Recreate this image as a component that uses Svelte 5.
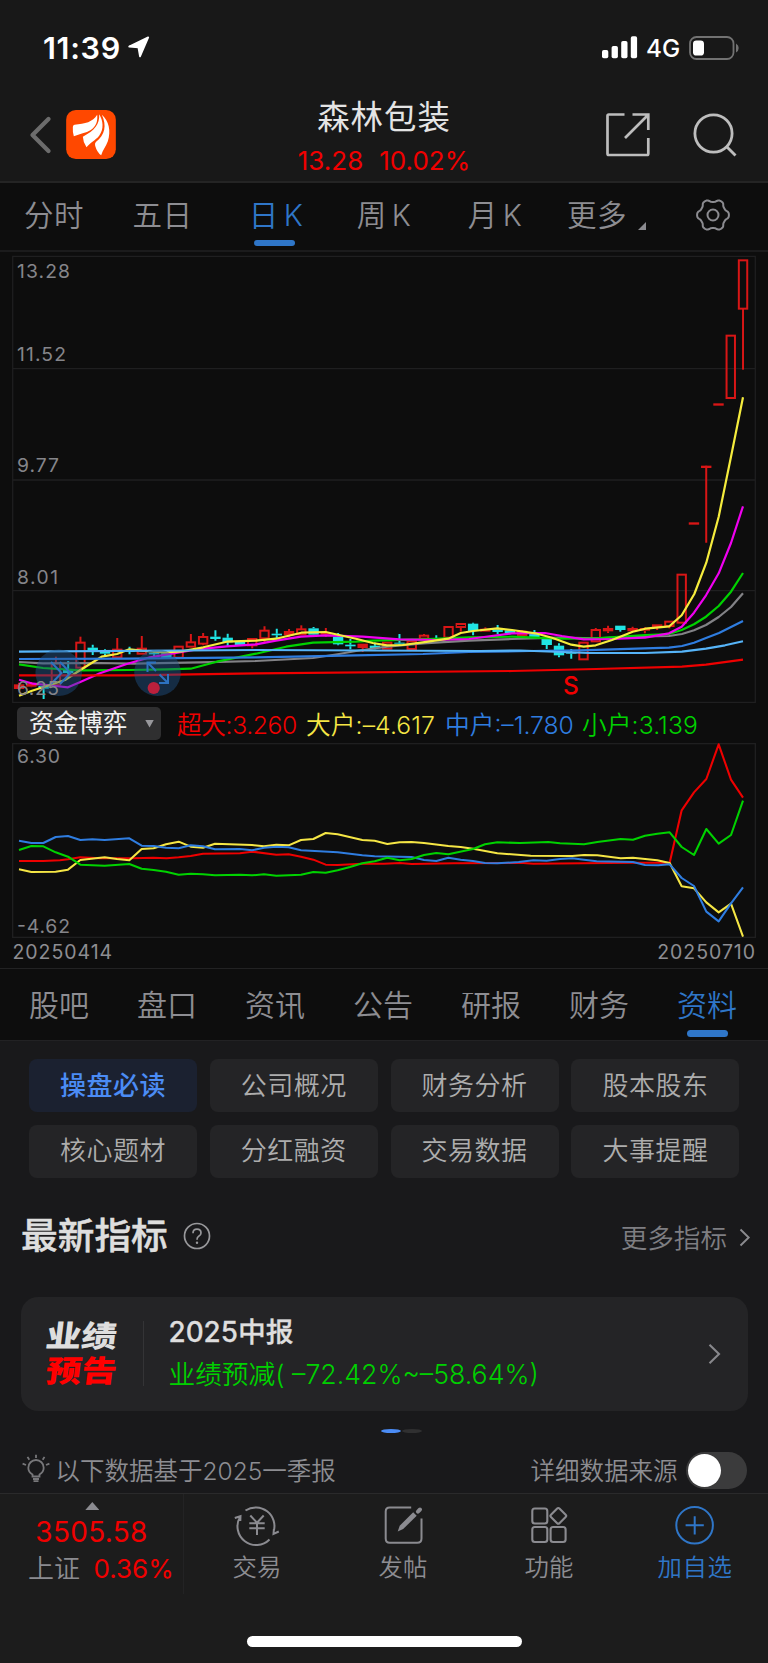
<script>
  const periods = ['分时', '五日', '日 K', '周 K', '月 K', '更多'];
  const sections = ['股吧', '盘口', '资讯', '公告', '研报', '财务', '资料'];
  const topics = ['操盘必读', '公司概况', '财务分析', '股本股东', '核心题材', '分红融资', '交易数据', '大事提醒'];
  const flows = [
    { name: '超大', value: '3.260', color: '#f00000', width: 129, spacing: -0.4 },
    { name: '大户', value: '–4.617', color: '#f5e645', width: 139, spacing: 0.1 },
    { name: '中户', value: '–1.780', color: '#2f7de0', width: 137, spacing: 0 },
    { name: '小户', value: '3.139', color: '#00d200', width: 120, spacing: 0.1 }
  ];

  // kind: u = up (hollow), f = up (filled), d = down; then open/close and high/low
  const candles = [
    ['f', 283, 297, 278, 299], ['f', 280, 290, 276, 292], ['d', 288, 296, 280, 327], ['u', 220, 284, 200, 284],
    ['d', 237, 249, 213, 260], ['u', 158, 233, 140, 233], ['d', 173, 182, 164, 195], ['d', 186, 191, 178, 200],
    ['u', 179, 202, 144, 202], ['d', 180, 186, 170, 193], ['u', 176, 191, 138, 191], ['d', 188, 193, 183, 200],
    ['d', 190, 204, 190, 204], ['u', 170, 203, 170, 203], ['u', 157, 170, 132, 170], ['u', 141, 161, 129, 166],
    ['d', 140, 147, 121, 152], ['d', 143, 157, 131, 168], ['d', 156, 165, 156, 165], ['u', 147, 166, 147, 175],
    ['u', 122, 145, 109, 158], ['d', 131, 136, 116, 145], ['f', 123, 136, 117, 142], ['u', 118, 133, 106, 133],
    ['d', 115, 134, 111, 138], ['f', 127, 134, 114, 140], ['d', 140, 163, 129, 166], ['d', 164, 169, 147, 178],
    ['f', 161, 174, 161, 186], ['d', 167, 174, 158, 178], ['u', 158, 176, 158, 176], ['d', 158, 161, 132, 165],
    ['u', 154, 177, 154, 177], ['u', 137, 146, 132, 146], ['d', 144, 148, 136, 152], ['u', 111, 143, 111, 143],
    ['u', 102, 111, 102, 125], ['d', 101, 123, 98, 136], ['f', 116, 125, 112, 125], ['d', 118, 126, 105, 132],
    ['d', 121, 130, 119, 133], ['f', 122, 138, 120, 138], ['d', 130, 142, 120, 144], ['d', 144, 165, 144, 177],
    ['d', 167, 196, 160, 202], ['d', 186, 191, 177, 206], ['u', 158, 208, 158, 208], ['u', 120, 154, 114, 154],
    ['f', 114, 124, 107, 129], ['d', 107, 120, 107, 125], ['f', 114, 124, 110, 126], ['f', 114, 122, 112, 130],
    ['f', 103, 112, 103, 120], ['u', 95, 108, 95, 115], ['u', -46, 98, -46, 98], ['f', -203, -196, -203, -196],
    ['f', -373, -366, -370, -142], ['f', -560, -553, -560, -553], ['u', -763, -576, -763, -576], ['u', -989, -844, -989, -661]
  ].map(([kind, top, bottom, high, low], i) => ({
    kind,
    x: 19.1 + i * 12.27,
    top: 590 + top / 3,
    bottom: 590 + bottom / 3,
    high: 590 + high / 3,
    low: 590 + low / 3
  }));

  const averages = [
    ['#828286', '19,662 43,663.3 100,663 133,663.7 200,662.3 256,661 313,658 339,654 356,651 387,646.7 423,643.3 469,640.7 512,639 559,637.7 596,638.3 645,636.3 669,636 682,634 694,630.3 706,625 718.7,617 731,607 743,593.3'],
    ['#00d200', '19,664.3 43,668 80,670.3 129,670 167,669.3 190.7,668.7 216.7,661.7 256,653.7 286,646.7 313,642.7 356,641.7 373,640.7 422.7,639.3 469,637.3 512,636.7 558.7,638.7 595.7,638.3 645,635 669,634 681.7,630 694,624.3 706,616.7 718.7,606 731,591.7 743,573'],
    ['#f000f0', '19,679.7 33,683.7 43,684.7 55.7,686 68,687.3 80.3,682 100,673.3 126.7,664 150,657.3 173.3,653.3 196.7,649.3 226.7,646.3 256,644.3 276,640.7 301,636.7 325.7,635.3 362.7,636.7 399.3,639.3 436,640 469,639 512,633.3 545,633 562,636 583.7,639.3 612,639 645,637.7 669,633.3 681.7,626.7 694,612.7 706,595.3 718.7,573.3 731,543 743,506.3'],
    ['#f5ec3d', '19,695.7 31.3,691 46.7,686 65,680 80.3,670 101.7,656.7 117,654 129.3,649.3 141.7,650.7 163.3,652.3 181.7,651.3 203.3,647.3 226.7,641.7 256,640.7 276,638.7 301.3,632.7 325.7,632 338,634.7 356,638.7 372.7,643 387,645.3 402.7,645 422.7,642.3 448.3,638.7 460.7,633 473,631 497.3,628.3 512,630 535.3,633.3 552,637.7 571.3,644.7 583.7,646.7 595.7,645.3 612,640 632.7,631.7 645.3,628.7 669.3,626.3 681.7,615.3 694.3,594 706.3,562.7 718.7,516.7 731,456.7 743,397.3'],
    ['#2f7de0', '19,659 128,658.7 256,657.3 356,655.3 423,654 469,652 530,651 580,650.3 669,647.7 682,646 694,642.7 706,638 719,633 743,621'],
    ['#56b4f8', '19,651.7 256,650 480,651 520,650.5 589,653 645,653 682,651.7 706,648.7 725,645.3 743,641.3'],
    ['#ee0000', '19,675.3 128,675.3 256,673.3 512,671 596,669 682,666.7 706,664.7 743,659.7']
  ];

  const flowLines = [
    ['#ee0000', '57,363 130,363 180,361 204,358 241,352 300,355 400,355 460,353 500,355 536,352 572,348 609,341 720,340 756,335 829,344 866,343 903,350 940,359 977,374 1013,375 1087,371 1152,371 1200,369 1235,372 1360,370 1570,369 1600,371 1900,368 2009,368 2045,211 2082,157 2119,117 2156,13 2193,119 2229,173'],
    ['#f5e645', '57,388 94,396 167,395 204,389 241,360 314,352 351,357 388,361 425,327 461,325 498,313 536,305 572,320 609,323 645,311 756,315 792,319 829,314 866,316 903,300 940,297 977,279 1013,283 1087,300 1124,302 1162,312 1199,307 1235,306 1272,309 1345,318 1382,321 1419,326 1492,340 1592,347 1717,348 1752,345 1792,346 1862,355 1899,353 1972,361 2009,369 2045,439 2082,445 2119,487 2156,517 2193,491 2229,590'],
    ['#2f7de0', '57,302 94,309 130,309 167,291 204,288 241,300 277,298 314,300 388,295 425,317 461,318 498,323 536,325 572,316 609,319 645,328 720,327 756,331 792,323 829,320 866,322 903,331 1013,337 1087,346 1124,349 1235,351 1272,360 1309,363 1345,353 1382,359 1419,363 1455,369 1492,370 1556,366 1600,361 1640,362 1680,357 1717,355 1752,359 1790,364 1899,366 1935,375 1975,376 2009,373 2045,414 2082,438 2119,515 2156,544 2193,490 2229,442'],
    ['#00d200', '57,330 94,318 130,319 167,337 204,350 241,374 314,377 388,372 425,386 461,390 498,395 536,404 572,401 609,403 645,406 720,404 756,406 792,403 829,407 903,404 940,396 977,398 1013,391 1050,381 1087,370 1124,364 1162,353 1199,361 1235,357 1272,345 1309,339 1345,343 1419,327 1455,313 1492,307 1560,309 1645,306 1680,310 1752,313 1792,306 1862,297 1899,299 1935,287 1972,281 2009,277 2045,321 2082,345 2119,267 2156,311 2193,285 2229,182']
  ];

  const priceLabels = [['13.28', 278, 53], ['11.52', 360.5, 49], ['9.77', 472, 42], ['8.01', 583.5, 41], ['6.25', 695.3, 42]];

  const gear = Array.from({ length: 120 }, (_, i) => {
    const a = (i * Math.PI) / 60;
    const r = 14.5 + (1.4 * Math.tanh(1.6 * Math.cos(6 * a))) / Math.tanh(1.6);
    return `${(18 + r * Math.cos(a)).toFixed(2)},${(18 + r * Math.sin(a)).toFixed(2)}`;
  }).join(' ');
</script>

<div class="phone">
  <div class="status">
    <span class="time">11:39</span>
    <svg class="locate" width="22" height="22" viewBox="0 0 22 22"><path d="M1.2 10.5 L20.2 1.4 L12 20.4 L10.4 11.4 Z" fill="#fff" stroke="#fff" stroke-width="1.8" stroke-linejoin="round" /></svg>
    <svg class="signal" width="36" height="23" viewBox="0 0 36 23" fill="#fff">
      <rect x="0" y="14" width="6.3" height="8.3" rx="1.8" /><rect x="9.6" y="10" width="6.3" height="12.3" rx="1.8" />
      <rect x="19.2" y="5" width="6.3" height="17.3" rx="1.8" /><rect x="28.8" y="0.3" width="6.3" height="22" rx="1.8" />
    </svg>
    <span class="net">4G</span>
    <svg class="battery" width="51" height="24" viewBox="0 0 51 24">
      <rect x="1" y="1" width="43.5" height="22" rx="6.5" fill="none" stroke="#727272" stroke-width="1.8" />
      <path d="M47 7.5 Q49.7 9 49.7 12 T47 16.5Z" fill="#727272" />
      <rect x="4" y="4.4" width="11" height="15.2" rx="3.4" fill="#fff" />
    </svg>
  </div>

  <header>
    <svg class="back" width="24" height="40" viewBox="0 0 24 40"><path d="M20.5 4 L4.5 20 L20.5 36" fill="none" stroke="#6c6c6c" stroke-width="4.3" stroke-linecap="round" stroke-linejoin="round" /></svg>
    <svg class="logo" width="50" height="49" viewBox="198 330 149 147">
      <rect x="198" y="330" width="149" height="147" rx="29" fill="#ff4800" />
      <g fill="#fff">
        <path d="M291 344 C278 366 255 371 223 374 Q218 375 218 381 Q217 396 221 409 C238 401 258 399 272 390 C289 378 293 362 291 344Z" />
        <path d="M297 343 C299 372 284 392 248 410 Q249 428 259 442 C270 427 286 421 297 407 C312 388 309 361 297 343Z" />
        <path d="M305 344 C320 376 315 404 287 426 Q283 431 285 437 Q290 456 303 466 C308 450 317 440 323 424 C333 392 326 362 305 344Z" />
      </g>
    </svg>
    <div class="title">
      <h1>森林包装</h1>
      <p><span>13.28</span><span>10.02%</span></p>
    </div>
    <svg class="share" width="46" height="46" viewBox="0 0 46 46" fill="none" stroke="#bdbdbd" stroke-width="2.7">
      <path d="M19.5 2.5 H3.8 Q2.5 2.5 2.5 3.8 V41.5 Q2.5 43 3.8 43 H42 Q43.3 43 43.3 41.5 V26 M27.5 2.5 H43.3 V18 M43 3 L20 26" />
    </svg>
    <svg class="search" width="46" height="46" viewBox="0 0 46 46" fill="none" stroke="#bdbdbd" stroke-width="2.8"><circle cx="21.5" cy="21.5" r="18.6" /><path d="M34 34 L43.5 43.5" /></svg>
  </header>

  <nav class="periods">
    {#each periods as p, i}
      <span class:on={i === 2}>{p}</span>
    {/each}
    <i class="corner"></i>
    <svg class="gear" width="36" height="36" viewBox="0 0 36 36" fill="none" stroke="#8b8b90" stroke-width="2"><polygon points={gear} stroke-linejoin="round" /><circle cx="18" cy="18" r="5.5" /></svg>
  </nav>

  <svg class="kline" width="768" height="451" viewBox="0 252 768 451">
    <g fill="none" stroke="#1f1f20" stroke-width="1.3">
      <rect x="12.7" y="256.4" width="742.6" height="446" />
      <path d="M13 368.7H755M13 480H755M13 590.6H755" />
    </g>
    {#each candles as c}
      {@const color = c.kind === 'd' ? '#20e4e4' : '#d81616'}
      <g stroke={color} stroke-width="2">
        <path d="M{c.x} {c.high}V{c.top}M{c.x} {c.bottom}V{c.low}" />
        {#if c.kind === 'u'}
          <rect x={c.x - 4.2} y={c.top} width="8.4" height={c.bottom - c.top} fill="none" />
        {:else}
          <rect x={c.x - 5.2} y={c.top} width="10.4" height={c.bottom - c.top} fill={color} stroke="none" />
        {/if}
      </g>
    {/each}
    {#each averages as [color, points]}
      <polyline {points} fill="none" stroke={color} stroke-width="2.2" stroke-linejoin="round" />
    {/each}
    <g fill="#1f5288" fill-opacity="0.45"><circle cx="58.7" cy="672.7" r="23.3" /><circle cx="157.5" cy="672.7" r="23.3" /></g>
    <g fill="none" stroke="#2d72c0" stroke-width="2">
      <path d="M51 662 L61.5 673 L51 684 M60 662 L70.5 673 L60 684" />
      <path d="M156 671 L147.5 662.5 M147.5 672 V662.5 H156 M159.5 674.5 L168 683 M168 674 V683 H159" />
    </g>
    <circle cx="153.7" cy="688" r="6.1" fill="#bb203c" />
    <g class="axis">
      {#each priceLabels as [label, y, w]}
        <text x="17" {y} textLength={w}>{label}</text>
      {/each}
    </g>
    <text class="sell" x="563" y="693.5">S</text>
  </svg>

  <div class="legend">
    <div class="select">资金博弈<i></i></div>
    {#each flows as f}
      <span style="color:{f.color};width:{f.width}px;letter-spacing:{f.spacing}px">{f.name}:{f.value}</span>
    {/each}
  </div>

  <svg class="flow" width="768" height="196" viewBox="0 9 2304 588">
    <rect x="38" y="11" width="2228" height="581" fill="none" stroke="#1f1f20" stroke-width="4" />
    {#each flowLines as [color, points]}
      <polyline {points} fill="none" stroke={color} stroke-width="6.2" stroke-linejoin="round" />
    {/each}
    <g class="axis big"><text x="51" y="70" textLength="129">6.30</text><text x="51" y="579" textLength="159">-4.62</text></g>
  </svg>
  <div class="dates"><span>20250414</span><span>20250710</span></div>

  <nav class="sections">
    {#each sections as s, i}
      <span class:on={i === 6}>{s}</span>
    {/each}
  </nav>

  <main>
    <div class="topics">
      {#each topics as t, i}
        <button class:active={i === 0}>{t}</button>
      {/each}
    </div>
    <div class="heading">
      <h2>最新指标</h2>
      <svg width="28" height="28" viewBox="0 0 28 28" fill="none" stroke="#98989b" stroke-width="1.7"><circle cx="14" cy="14" r="12.5" /><path d="M10 11.2 Q10 7.2 14 7.2 T18 11 Q18 13 15.7 14.3 Q14 15.3 14 17.8" /><circle cx="14" cy="20.7" r="1.2" fill="#98989b" stroke="none" /></svg>
      <span class="more">更多指标</span>
      <svg class="chevron" width="12" height="19" viewBox="0 0 12 19" fill="none" stroke="#8b8b8f" stroke-width="1.9"><path d="M1.5 1.5 L9.7 9.5 L1.5 17.5" /></svg>
    </div>
    <section class="card">
      <div class="stamp"><b>业绩</b><b class="red">预告</b></div>
      <div class="report"><strong>2025中报</strong><p>业绩预减( –72.42%~–58.64%)</p></div>
      <svg width="14" height="22" viewBox="0 0 14 22" fill="none" stroke="#88888c" stroke-width="2.1"><path d="M1.5 1.8 L11 11 L1.5 20.2" /></svg>
    </section>
    <div class="pager"><i></i><i></i></div>
    <div class="source">
      <svg width="28" height="30" viewBox="0 0 28 30" fill="none" stroke="#77777a" stroke-width="1.8">
        <path d="M10.5 22.5 V20.5 Q6.3 18 6.3 13.7 A7.7 7.7 0 0 1 21.7 13.7 Q21.7 18 17.5 20.5 V22.5 Z M11 25 H17 M11.5 27.2 H16.5" />
        <path d="M14 0.8 V4 M5.5 2.9 L7.3 5.8 M22.5 2.9 L20.7 5.8 M0.6 9.6 L4 11 M27.4 9.6 L24 11" />
      </svg>
      <span class="note">以下数据基于2025一季报</span>
      <span class="detail">详细数据来源</span>
      <i class="toggle"></i>
    </div>
  </main>

  <footer>
    <div class="index">
      <i></i>
      <b>3505.58</b>
      <p><span>上证</span><em>0.36%</em></p>
    </div>
    <div class="action">
      <svg width="46" height="42" viewBox="0 1 46 42" fill="none" stroke="#8b8b90" stroke-width="2">
        <path d="M11.5 6.5 A18.7 18.7 0 0 1 39.5 28 M35.5 35.5 A18.7 18.7 0 0 1 6 13 M0.8 14 L6.5 12.2 L6.3 17 M44.8 27.5 L39.5 29.8 L39.9 25" />
        <path d="M16.3 11.5 L23 18.7 L29.7 11.5 M15.3 19.3 H30.7 M15.3 24.3 H30.7 M23 18.7 V31" />
      </svg>
      <span>交易</span>
    </div>
    <div class="action">
      <svg width="46" height="42" viewBox="-0.7 0 46 42" fill="none" stroke="#8b8b90" stroke-width="2">
        <path d="M30.5 2.5 H9 Q5 2.5 5 6.5 V33.5 Q5 37.8 9 37.8 H36.5 Q40.8 37.8 40.8 33.5 V13.5" />
        <path d="M17 26.5 L19 20.8 L32.5 7.2 L36 10.8 L22.5 24 Z" fill="#8b8b90" stroke="none" /><path d="M37.2 6.6 L39.3 4.5" stroke-width="4" stroke-linecap="round" />
      </svg>
      <span>发帖</span>
    </div>
    <div class="action">
      <svg width="46" height="42" viewBox="-0.3 0 46 42" fill="none" stroke="#8b8b90" stroke-width="2.1">
        <rect x="6" y="3.5" width="15" height="15" rx="2.5" /><rect x="6" y="22" width="15" height="15" rx="2.5" /><rect x="24.3" y="22" width="15" height="15" rx="2.5" />
        <rect x="26" y="4.8" width="12" height="12" rx="1.6" transform="rotate(45 32 10.8)" />
      </svg>
      <span>功能</span>
    </div>
    <div class="action add">
      <svg width="46" height="42" viewBox="0 0 46 42" fill="none" stroke="#2f76c8" stroke-width="2"><circle cx="22.6" cy="20.3" r="18.3" /><path d="M13.6 20.3 H31.8 M22.7 11.2 V29.4" /></svg>
      <span>加自选</span>
    </div>
    <div class="home"></div>
  </footer>
</div>

<style>
  :global(body) { margin: 0; background: #181818; }
  .phone { width: 768px; height: 1663px; overflow: hidden; display: flex; flex-direction: column; background: #0d0d0d; color: #8d8d92; font-family: Inter, "Noto Sans CJK SC", sans-serif; font-weight: 350; white-space: nowrap; }
  .phone > * { flex: none; }
  svg { display: block; flex: none; }
  h1, h2, p { margin: 0; }
  i, em { font-style: normal; }

  .status { height: 95px; box-sizing: border-box; display: flex; align-items: center; padding-left: 43px; background: #181818; color: #fff; }
  .time { width: 85px; font-size: 30.5px; font-weight: 600; letter-spacing: 0.7px; }
  .signal { margin-left: 452px; margin-right: 8px; }
  .locate { margin-top: -1px; }
  .net { width: 43px; font-size: 24.3px; font-weight: 500; }

  header { height: 88px; display: flex; padding-left: 28px; background: #181818; border-bottom: 2px solid #242424; box-sizing: border-box; }
  .back { margin-top: 20px; margin-right: 14px; }
  .logo { margin-top: 15px; }
  .title { width: 200px; margin-left: 168px; text-align: center; }
  h1 { margin-top: 1px; font-size: 32.4px; line-height: 44px; font-weight: 400; letter-spacing: 1px; color: #e4e4e4; }
  .title p { color: #f00000; display: flex; justify-content: center; gap: 16px; font-size: 26px; line-height: 30px; font-weight: 400; margin-top: 6px; }
  .share { margin: 17px 0 0 120.5px; }
  .search { margin: 17px 0 0 41.5px; }

  .periods { position: relative; height: 69px; box-sizing: border-box; border-bottom: 2px solid #1b1b1c; display: grid; grid-template-columns: 108px 109px 118px 98px 124px 80px; font-size: 29.5px; line-height: 64px; text-align: center; letter-spacing: 0.6px; word-spacing: -4px; }
  .on { position: relative; color: #2f76c8; }
  .on::after { content: ""; position: absolute; left: 50%; width: 41px; height: 6.5px; margin-left: -22px; border-radius: 4px; background: #2f76c8; top: 56.5px; }
  .corner { position: absolute; left: 638px; top: 39px; width: 8px; height: 8px; background: #8b8b90; clip-path: polygon(100% 0, 100% 100%, 0 100%); }
  .gear { position: absolute; left: 695px; top: 14px; }

  .axis text { font-size: 19.3px; font-weight: 400; fill: #85858a; }
  .axis.big text { font-size: 58px; }
  .sell { font-size: 24.5px; font-weight: 500; fill: #f00000; }
  .kline { height: 451px; }

  .legend { height: 40px; display: flex; align-items: center; padding-left: 17px; font-size: 24.7px; }
  .select { width: 144px; height: 33px; margin: 1px 16px 0 0; padding-left: 12px; box-sizing: border-box; border-radius: 5px; background: #2f2f30; color: #f2f2f2; display: flex; align-items: center; font-size: 24.6px; line-height: 33px; font-weight: 400; }
  .select i { margin-left: auto; margin-right: 7px; width: 9px; height: 8px; background: #98989c; clip-path: polygon(0 0, 100% 0, 50% 100%); }
  .legend span { flex: none; margin-top: -1px; }

  .flow { height: 196px; }
  .dates { display: flex; justify-content: space-between; padding: 0 12px 0 12.5px; height: 30px; line-height: 26px; box-sizing: border-box; border-bottom: 1px solid #222223; font-size: 19.5px; font-weight: 400; letter-spacing: 0.95px; }

  .sections { height: 72px; box-sizing: border-box; padding-left: 5px; display: grid; grid-template-columns: repeat(7, 108px); text-align: center; font-size: 30px; line-height: 72px; border-bottom: 1px solid #222224; }
  .sections .on::after { top: 61px; margin-left: -20px; }

  main { height: 452px; background: #19191b; overflow: hidden; }
  .topics { display: grid; grid-template-columns: repeat(4, 168px); gap: 12.5px 12.8px; padding: 18px 0 0 29px; }
  button { height: 53px; padding: 0; border: 0; border-radius: 8px; background: #242426; color: #adadad; font: 350 26px/50px Inter, "Noto Sans CJK SC", sans-serif; letter-spacing: 0.5px; }
  .active { background: #1b2130; color: #4b8cf5; font-weight: 500; }
  .heading { height: 119px; display: flex; align-items: center; padding: 0 17px 0 21px; box-sizing: border-box; padding-bottom: 2px; }
  h2 { color: #dedede; font-size: 36.7px; font-weight: 500; width: 162px; line-height: 50px; -webkit-text-stroke: 0.5px #dedede; }
  .more { margin-left: auto; margin-right: 12px; font-size: 26.6px; color: #7e7e82; }
  .chevron { margin-top: 3px; }
  .card { margin: 0 20.5px 0 21px; height: 114.5px; border-radius: 17px; background: #242426; display: flex; align-items: center; padding-right: 26px; }
  .stamp { width: 123px; height: 65px; box-sizing: border-box; border-right: 1.5px solid #343436; margin-right: 24.5px; padding-left: 24.5px; display: flex; flex-direction: column; }
  .stamp b { width: 72px; font-size: 35.5px; line-height: 34.5px; font-weight: 900; color: #dedede; transform: translateY(-1px) skewX(-7deg) scaleY(0.85); }
  .stamp .red { color: #f00; }
  .report { flex: 1; }
  .report strong { display: block; font-size: 27.8px; line-height: 38px; font-weight: 500; color: #dedede; -webkit-text-stroke: 0.3px #dedede; }
  .report p { margin-top: 3px; font-size: 26.7px; line-height: 40px; color: #00d000; }
  .pager { display: flex; justify-content: center; gap: 1px; margin-top: 18px; padding-left: 35px; }
  .pager i { width: 20px; height: 4px; border-radius: 50%; background: #303031; }
  .pager i:first-child { background: #4b8cf5; }
  .source { display: flex; align-items: center; margin: 19px 21px 0 21.5px; height: 37px; font-size: 24.5px; }
  .source svg { margin-top: -3px; }
  .source span { margin-top: -2px; }
  .note { margin-left: 6px; }
  .detail { margin-left: auto; margin-right: 8.5px; }
  .toggle { width: 61px; height: 37px; box-sizing: border-box; border-radius: 19px; padding: 2px; background: #3b3b3c; }
  .toggle::before { content: ""; display: block; width: 33px; height: 33px; border-radius: 50%; background: #fff; }

  footer { position: relative; height: 170px; box-sizing: border-box; border-top: 1.5px solid #2a2a2b; background: #1c1c1c; display: grid; grid-template-columns: 184px repeat(4, 146px); align-items: start; }
  .index { height: 100px; border-right: 1px solid #232324; color: #f00000; text-align: center; font-weight: 400; }
  .index > i { display: block; width: 14px; height: 8px; margin: 8px 0 0 85.3px; background: #8b8b90; clip-path: polygon(50% 0, 100% 100%, 0 100%); }
  .index b { display: block; font-size: 28px; line-height: 34px; font-weight: 400; margin-top: 5px; letter-spacing: 0.3px; }
  .index p { display: flex; padding-left: 28px; gap: 13.5px; font-size: 26px; line-height: 38px; margin-top: 1px; }
  .index p span { color: #8b8b90; font-weight: 350; }
  .action { display: flex; flex-direction: column; align-items: center; padding-top: 11px; font-size: 24.4px; line-height: 40px; }
  .add { color: #2f76c8; }
  .add span { letter-spacing: 0.6px; }
  .home { position: absolute; left: 247px; bottom: 16px; width: 275px; height: 11px; border-radius: 6px; background: #fff; }
</style>
